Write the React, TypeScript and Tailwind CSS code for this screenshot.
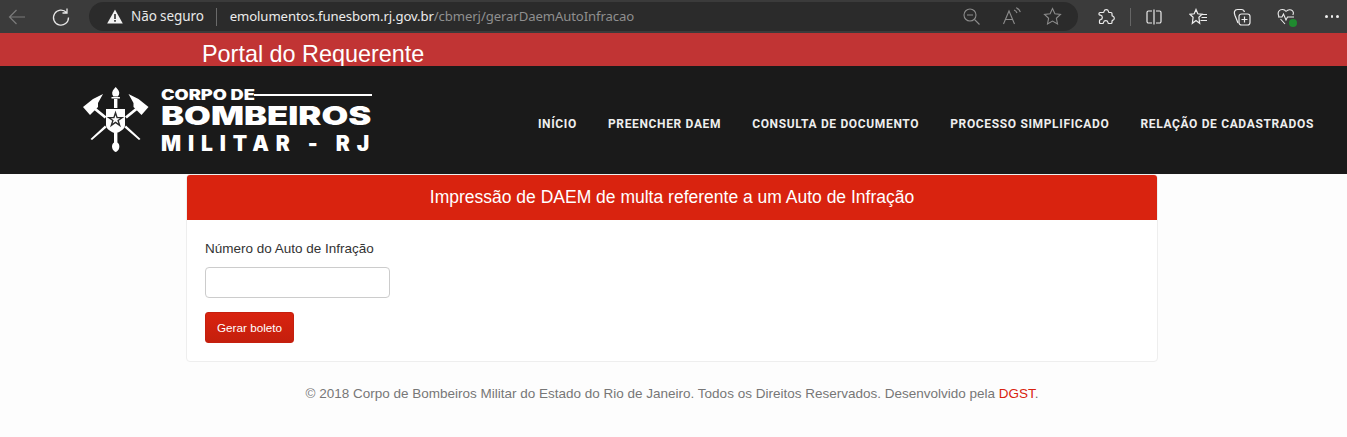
const NAV = ["INÍCIO", "PREENCHER DAEM", "CONSULTA DE DOCUMENTO", "PROCESSO SIMPLIFICADO", "RELAÇÃO DE CADASTRADOS"];

function BrowserBar() {
  return (
    <div className="flex h-[33px] items-center bg-[#3b3b3b] text-[#e6e6e6]">
      <svg width="20" height="20" viewBox="0 0 20 20" fill="none" stroke="#7b7b7b" strokeWidth="1.2" className="ml-[7px]">
        <path d="M18 10H2.500M9.500 3l-7 7 7 7" />
      </svg>
      <svg width="20" height="20" viewBox="0 0 20 20" fill="none" stroke="#e6e6e6" strokeWidth="1.3" className="ml-[24px]">
        <path d="M15.500 5.500A7.500 7.500 0 1 0 17.500 10.500M16 1.500v4.500h-4.500" />
      </svg>
      <div className="ml-[18px] flex h-[29px] w-[989px] items-center rounded-full bg-[#2b2b2b]">
        <svg width="16" height="15" viewBox="0 0 16 15" className="ml-[18px]">
          <path d="M8 0.500 15.800 14.500H0.200Z" fill="#f2f2f2" />
          <path d="M7.200 5h1.600v5H7.200zM7.200 11h1.600v1.700H7.200z" fill="#2b2b2b" />
        </svg>
        <span className="ml-[8px] font-['Noto_Sans',sans-serif] text-[13.500px] tracking-[-0.1px] text-[#e8e8e8]">Não seguro</span>
        <span className="ml-[12px] h-[18px] w-px bg-[#6a6a6a]" />
        <span className="ml-[13px] font-['Noto_Sans',sans-serif] text-[13.150px] tracking-[-0.1px] text-[#ececec]">
          emolumentos.funesbom.rj.gov.br<span className="text-[#8f8f8f]">/cbmerj/gerarDaemAutoInfracao</span>
        </span>
        <div className="ml-auto flex items-center gap-[21px] pr-[16px] text-[#8c8c8c]">
          <svg width="19" height="19" viewBox="0 0 19 19" fill="none" stroke="currentColor" strokeWidth="1.1">
            <circle cx="8" cy="8" r="6" />
            <path d="M5 8h6M12.500 12.500l5 5" />
          </svg>
          <svg width="20" height="19" viewBox="0 0 20 19" fill="none" stroke="currentColor" strokeWidth="1.1">
            <path d="M1.500 17 7 4l5.500 13M3.500 12.500h7M12 3c1.500.5 2.500 1.500 3 3M14 0.800c2 .7 3.700 2.200 4.300 4.400" />
          </svg>
          <svg width="19" height="19" viewBox="0 0 19 19" fill="none" stroke="currentColor" strokeWidth="1.1">
            <path d="M9.500 1.500l2.400 5.200 5.600.7-4.100 3.900 1.100 5.600-5-2.800-5 2.800 1.100-5.600L1.500 7.400l5.600-.7z" />
          </svg>
        </div>
      </div>
      <div className="flex flex-1 items-center text-[#ededed]">
        <svg width="18" height="18" viewBox="0 0 18 18" fill="none" stroke="currentColor" strokeWidth="1.2" className="ml-[19px]">
          <path d="M7 3.500a2.300 2.300 0 0 1 4.500 0c0 .8 0 1 .8 1h1.700c.6 0 1 .4 1 1v1.700c0 .8.2 1 1 1a2.200 2.200 0 0 1 0 4c-.8 0-1 .2-1 1v1.300c0 .6-.4 1-1 1h-2c-.8 0-1-.2-1-1a2.300 2.300 0 0 0-4.500 0c0 .8-.2 1-1 1H3.500c-.6 0-1-.4-1-1v-1.800c0-.8.2-1 1-1a2.300 2.300 0 0 0 0-4.500c-.8 0-1.500-.2-1.500-1V5.500c0-.6.400-1 1-1h3c.6 0 1-.2 1-1z" />
        </svg>
        <span className="ml-[15px] h-[18px] w-px bg-[#666]" />
        <svg width="16" height="16" viewBox="0 0 16 16" fill="none" stroke="currentColor" strokeWidth="1.2" className="ml-[15px]">
          <path d="M6 2H2.500A1.500 1.500 0 0 0 1 3.500v9A1.500 1.500 0 0 0 2.500 14H6M10 2h3.500A1.500 1.500 0 0 1 15 3.500v9a1.500 1.500 0 0 1-1.500 1.500H10M8 .5v15" />
        </svg>
        <svg width="19" height="18" viewBox="0 0 19 18" fill="none" stroke="currentColor" strokeWidth="1.2" className="ml-[27px]">
          <path d="M7 1.500l1.800 4.300 4.200.5-3.100 3 .8 6-3.700-2.800-3.700 2.800.8-6L1 6.300l4.200-.5zM12.500 6.500h5.500M12.500 9.500h5.500M11.500 12.500H18" />
        </svg>
        <svg width="18" height="18" viewBox="0 0 18 18" fill="none" stroke="currentColor" strokeWidth="1.2" className="ml-[25px]">
          <path d="M5 15 2 7.500C1.500 6 1 5 1.500 3.500 2 2 3 1.500 4.500 1.500h4c1.500 0 2.500.5 3 2.500" />
          <rect x="6" y="6" width="11" height="11" rx="2.500" />
          <path d="M11.500 8.500v6M8.500 11.500h6" />
        </svg>
        <div className="relative ml-[26px]">
          <svg width="18" height="18" viewBox="0 0 18 18" fill="none" stroke="currentColor" strokeWidth="1.1">
            <path d="M9 3.500C7.500 1 3.500 1 2 3c-1.500 2-.8 4 0 5.500M1 9h4l1.500-3 2.500 6 1.500-3H17M15.800 7c1-2 .7-3.200-.3-4.200-1.500-1.500-4.500-1.500-6.500 .7M3.500 11 8 16" />
          </svg>
          <span className="absolute -right-[2px] -bottom-[1px] h-[8px] w-[8px] rounded-full bg-[#1f8a2f]" />
        </div>
        <div className="ml-[30px] flex gap-[3px]">
          <span className="h-[2.500px] w-[2.500px] rounded-full bg-[#eee]" />
          <span className="h-[2.500px] w-[2.500px] rounded-full bg-[#eee]" />
          <span className="h-[2.500px] w-[2.500px] rounded-full bg-[#eee]" />
        </div>
      </div>
    </div>
  );
}

function Emblem() {
  return (
    <svg width="76" height="72" viewBox="0 0 76 72" fill="#fff">
      {/* torch */}
      <path d="M37.700 3c2.500 2.500 4.300 5 3.300 7.500l-1 2h-4.600l-1-2c-1-2.500.8-5 3.300-7.500z" />
      <path d="M33.500 13h8.400v1.500h-8.400zM36 15h3.400v9H36z" />
      {/* axes */}
      <path d="M5 23 15 15 25 10 20 19 20 23 12 31z" />
      <path d="M18 24l10.500 8.500-1.800 2L16.200 26z" />
      <path d="M70.500 23 60.500 15 50.500 10 55.500 19 55.500 23 63.500 31z" />
      <path d="M57.500 24 47 32.500l1.800 2L59.300 26z" />
      {/* shield */}
      <path d="M28 25h19v16c0 4-4.500 6.500-9.500 8.500C32.500 47.500 28 45 28 41z" />
      <path d="M37.500 26.500l2.100 6.400 6.700 0-5.400 3.900 2.100 6.400-5.500-3.900-5.500 3.900 2.100-6.400-5.400-3.900 6.700 0z" fill="#2a2a2a" />
      <path d="M37.500 31l1.100 3.300 3.500 0-2.800 2 1.100 3.300-2.900-2-2.900 2 1.100-3.300-2.800-2 3.500 0z" />
      {/* lower handles */}
      <path d="M36 49h3.400v9.500c1.700 1 2.300 3 1.800 5.500-.5 2-2 3.500-3.500 4-1.500-.5-3-2-3.500-4-.5-2.500.1-4.500 1.800-5.500z" />
      <path d="M27 41.500l1.500 2L14 56l-1.500-1zM48 41.500l-1.500 2L61 56l1.500-1z" />
    </svg>
  );
}

function Logo() {
  return (
    <div className="flex items-center font-['Inter',sans-serif] font-black text-white">
      <Emblem />
      <div className="ml-[7px] flex w-[211px] flex-col">
        <div className="flex h-[12px] items-center">
          <span className="w-[93px] origin-left scale-x-[1.3] text-[14px] leading-[12px] whitespace-nowrap">CORPO DE</span>
          <span className="h-[2px] flex-1 bg-white" />
        </div>
        <div className="mt-[5px] h-[20px] origin-left scale-x-[1.33] text-[26px] leading-[20px] whitespace-nowrap">BOMBEIROS</div>
        <div className="mt-[10px] h-[16px] text-[21px] leading-[16px] tracking-[6.900px] whitespace-nowrap">MILITAR - RJ</div>
      </div>
    </div>
  );
}

export default function App() {
  return (
    <div className="min-h-[437px] bg-[#fdfdfd] font-['Liberation_Sans',Arial,sans-serif] text-[#333]">
      <BrowserBar />
      <div className="h-[33px] overflow-hidden bg-[#c13434] pl-[202px] text-[23.400px] leading-[42px] text-white">Portal do Requerente</div>
      <header className="flex h-[108px] items-center justify-between bg-[#1a1a1a] pr-[33px] pl-[78px]">
        <Logo />
        <nav className="mt-[7px] flex gap-[31px]">
          {NAV.map((item) => (
            <a key={item} className="font-['Roboto',sans-serif] text-[12px] font-bold tracking-[0.650px] whitespace-nowrap text-[#eeeeee]">
              {item}
            </a>
          ))}
        </nav>
      </header>
      <main className="mx-[186px] w-[972px] rounded-[4px] border border-[#eeeeee] bg-white">
        <div className="flex h-[45px] items-center justify-center rounded-t-[3px] bg-[#d9230f] text-[17.500px] text-white">
          Impressão de DAEM de multa referente a um Auto de Infração
        </div>
        <div className="px-[18px] pt-[20px] pb-[18px]">
          <label className="block text-[13.500px] leading-[17px] text-[#333]">Número do Auto de Infração</label>
          <input className="mt-[10px] block h-[31px] w-[185px] rounded-[4px] border border-[#cccccc] bg-white" />
          <button className="mt-[14px] block h-[31px] w-[89px] rounded-[3px] border border-[#c51f0e] bg-linear-to-b from-[#d9230f] to-[#c41f0d] text-[11.700px] text-white">
            Gerar boleto
          </button>
        </div>
      </main>
      <footer className="mt-[23px] pr-[3px] text-center text-[13.500px] leading-[17px] text-[#777]">
        © 2018 Corpo de Bombeiros Militar do Estado do Rio de Janeiro. Todos os Direitos Reservados. Desenvolvido pela <span className="text-[#d9230f]">DGST</span>.
      </footer>
    </div>
  );
}
